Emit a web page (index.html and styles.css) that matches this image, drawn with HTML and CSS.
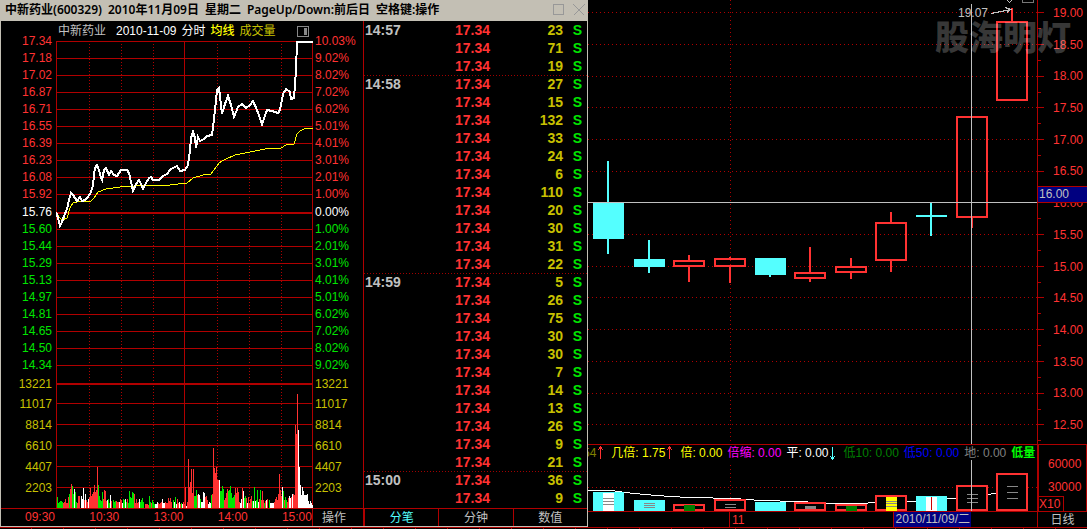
FILE: index.html
```
<!DOCTYPE html>
<html lang="zh-CN">
<head>
<meta charset="utf-8">
<title>中新药业(600329)</title>
<link rel="stylesheet" href="styles.css">
</head>
<body>
<main class="terminal">
  <section class="window">
    <header class="titlebar">
      <h1 class="title"><span>中新药业(600329)</span> <span>2010年11月09日</span> <span>星期二</span> <span>PageUp/Down:前后日</span> <span>空格键:操作</span></h1>
      <button class="winbtn" aria-label="最大化"><svg width="12" height="12" viewBox="0 0 12 12"><rect x=".5" y=".5" width="10" height="10"/></svg></button>
      <button class="winbtn" aria-label="关闭"><svg width="12" height="12" viewBox="0 0 12 12"><path d="M.5 .5l11 11M11.500 .5l-11 11"/></svg></button>
    </header>
    <div class="panes">
      <div class="intraday">
        <div class="legend">
          <span class="silver">中新药业</span>
          <span class="white date">2010-11-09</span>
          <span class="white">分时</span>
          <span class="yellow">均线</span>
          <span class="olive">成交量</span>
          <button class="panelbtn" aria-label="侧栏"><svg width="12" height="11" viewBox="0 0 12 11"><rect x=".5" y=".5" width="11" height="10" rx="1" fill="none" stroke="#888"/><path d="M7 2h3v7H7z" fill="#888"/></svg></button>
        </div>
        <div class="plotrow">
          <ol class="scale left">
            <li>17.34</li><li>17.18</li><li>17.02</li><li>16.87</li><li>16.71</li><li>16.55</li><li>16.39</li><li>16.23</li><li>16.08</li><li>15.92</li>
            <li class="base">15.76</li>
            <li class="down">15.60</li><li class="down">15.44</li><li class="down">15.29</li><li class="down">15.13</li><li class="down">14.97</li><li class="down">14.81</li><li class="down">14.65</li><li class="down">14.50</li><li class="down">14.34</li>
            <li class="vol first">13221</li><li class="vol">11017</li><li class="vol">8814</li><li class="vol">6610</li><li class="vol">4407</li><li class="vol">2203</li>
          </ol>
          <svg class="plot" viewBox="56 41 257 467" preserveAspectRatio="none" role="img" aria-label="分时走势">
            <g class="grid">
              <path d="M56 41.500H313M56 58.500H313M56 75.500H313M56 92.500H313M56 109.500H313M56 126.500H313M56 143.500H313M56 160.500H313M56 177.500H313M56 194.500H313M56 229.500H313M56 246.500H313M56 263.500H313M56 280.500H313M56 297.500H313M56 314.500H313M56 331.500H313M56 348.500H313M56 365.500H313M56 403.500H313M56 424.500H313M56 445.500H313M56 466.500H313M56 487.500H313M56.500 41V508M184.500 41V508M312.500 41V508"/>
              <path class="thick" d="M56 213H313M56 384H313"/>
              <path class="dots" d="M89.500 41V508M121.500 41V508M153.500 41V508M217.500 41V508M249.500 41V508M281.500 41V508"/>
            </g>
            <g id="volume"></g>
            <path class="avg" d="M56 212L59 217 62 220 67 218 70 208 73 203 77 202 91 201 94 198 98 192 106 189 120 187 135 186 150 185 170 185 187 183 193 178 203 175 211 174 214 170 219 163 224 160 235 155 250 152 265 149 281 148 286 145 294 144 297 134 300 131 304 129 313 128"/>
            <path class="price" d="M56 212L58 218 60 226 62 222 64 216 67 209 69 200 71 193 73 195 75 198 77 201 80 197 82 201 85 200 88 197 91 192 93 185 94 175 95 168 97 165 99 170 101 178 102 180 104 170 106 168 109 175 111 171 114 175 117 176 121 170 127 170 129 173 131 182 133 191 136 184 139 180 141 184 143 189 146 183 149 178 151 177 153 180 159 180 163 176 167 174 171 169 177 166 180 171 185 170 188 165 190 150 191 138 193 132 195 138 196 148 198 137 200 141 204 139 207 136 212 135 213 128 215 110 217 90 219 88 222 114 225 104 228 96 231 105 234 117 238 107 242 104 246 108 250 105 253 101 257 110 262 124 267 110 272 111 278 113 280 110 283 94 286 89 290 92 291 99 294 98 296 70 297 42 313 42"/>
          </svg>
          <ol class="scale right">
            <li>10.03%</li><li>9.02%</li><li>8.02%</li><li>7.02%</li><li>6.02%</li><li>5.01%</li><li>4.01%</li><li>3.01%</li><li>2.01%</li><li>1.00%</li>
            <li class="base">0.00%</li>
            <li class="down">1.00%</li><li class="down">2.01%</li><li class="down">3.01%</li><li class="down">4.01%</li><li class="down">5.01%</li><li class="down">6.02%</li><li class="down">7.02%</li><li class="down">8.02%</li><li class="down">9.02%</li>
            <li class="vol first">13221</li><li class="vol">11017</li><li class="vol">8814</li><li class="vol">6610</li><li class="vol">4407</li><li class="vol">2203</li>
          </ol>
        </div>
        <div class="timebar">
          <div class="times"><span>09:30</span><span>10:30</span><span>13:00</span><span>14:00</span><span>15:00</span></div>
          <button class="ops">操作</button>
        </div>
      </div>
      <div class="ticks">
        <table class="ticktable">
          <tbody>
          <tr><th>14:57</th><td class="p">17.34</td><td class="q">23</td><td class="s">S</td></tr>
          <tr><th></th><td class="p">17.34</td><td class="q">71</td><td class="s">S</td></tr>
          <tr><th></th><td class="p">17.34</td><td class="q">19</td><td class="s">S</td></tr>
          </tbody>
          <tbody>
          <tr><th>14:58</th><td class="p">17.34</td><td class="q">27</td><td class="s">S</td></tr>
          <tr><th></th><td class="p">17.34</td><td class="q">15</td><td class="s">S</td></tr>
          <tr><th></th><td class="p">17.34</td><td class="q">132</td><td class="s">S</td></tr>
          <tr><th></th><td class="p">17.34</td><td class="q">33</td><td class="s">S</td></tr>
          <tr><th></th><td class="p">17.34</td><td class="q">24</td><td class="s">S</td></tr>
          <tr><th></th><td class="p">17.34</td><td class="q">6</td><td class="s">S</td></tr>
          <tr><th></th><td class="p">17.34</td><td class="q">110</td><td class="s">S</td></tr>
          <tr><th></th><td class="p">17.34</td><td class="q">20</td><td class="s">S</td></tr>
          <tr><th></th><td class="p">17.34</td><td class="q">30</td><td class="s">S</td></tr>
          <tr><th></th><td class="p">17.34</td><td class="q">31</td><td class="s">S</td></tr>
          <tr><th></th><td class="p">17.34</td><td class="q">22</td><td class="s">S</td></tr>
          </tbody>
          <tbody>
          <tr><th>14:59</th><td class="p">17.34</td><td class="q">5</td><td class="s">S</td></tr>
          <tr><th></th><td class="p">17.34</td><td class="q">26</td><td class="s">S</td></tr>
          <tr><th></th><td class="p">17.34</td><td class="q">75</td><td class="s">S</td></tr>
          <tr><th></th><td class="p">17.34</td><td class="q">30</td><td class="s">S</td></tr>
          <tr><th></th><td class="p">17.34</td><td class="q">30</td><td class="s">S</td></tr>
          <tr><th></th><td class="p">17.34</td><td class="q">7</td><td class="s">S</td></tr>
          <tr><th></th><td class="p">17.34</td><td class="q">14</td><td class="s">S</td></tr>
          <tr><th></th><td class="p">17.34</td><td class="q">13</td><td class="s">S</td></tr>
          <tr><th></th><td class="p">17.34</td><td class="q">26</td><td class="s">S</td></tr>
          <tr><th></th><td class="p">17.34</td><td class="q">9</td><td class="s">S</td></tr>
          <tr><th></th><td class="p">17.34</td><td class="q">21</td><td class="s">S</td></tr>
          </tbody>
          <tbody>
          <tr><th>15:00</th><td class="p">17.34</td><td class="q">36</td><td class="s">S</td></tr>
          <tr><th></th><td class="p">17.34</td><td class="q">9</td><td class="s">S</td></tr>
          </tbody>
        </table>
        <nav class="tabs">
          <button class="tab active">分笔</button>
          <button class="tab">分钟</button>
          <button class="tab">数值</button>
        </nav>
      </div>
    </div>
  </section>

  <section class="daily">
    <div class="candles">
      <svg class="fill" viewBox="588 0 449 444" preserveAspectRatio="none" role="img" aria-label="日线">
        <path class="hdots" d="M588 12.500H1037M588 44.500H1037M588 76.500H1037M588 107.500H1037M588 139.500H1037M588 171.500H1037M588 234.500H1037M588 266.500H1037M588 297.500H1037M588 329.500H1037M588 361.500H1037M588 393.500H1037M588 424.500H1037M730.500 0V444"/>
        <g class="fall">
          <path d="M593 203h31v36h-31zM607 161h2v93h-2zM634 259h31v8h-31zM648 240h2v33h-2zM755 258h31v17h-31zM769 275h2v2h-2zM916 215h31v2h-31zM930 203h2v33h-2z"/>
        </g>
        <g class="rise">
          <path d="M674 261h30v5h-30zM715 259h30v7h-30zM795 273h30v5h-30zM836 267h30v5h-30zM876 223h30v37h-30zM957 117h30v100h-30zM997 22h30v78h-30z"/>
          <path d="M689 255v6M689 267v15M730 257v2M730 267v16M810 247v26M810 279v3M851 258v9M851 273v6M891 212v10M891 261v11M972 218v10M1012 8v14"/>
        </g>
        <path class="cross" d="M588 202.500H1037M971.500 4V444"/>
        <path class="note" d="M991 13.500L1011 9.500M1005 7.500L1011 9.500 1007 12.500M1007 0l2.500 2.500 2.500-2.500"/>
        <path d="M1022.500 0v2.500h11V0" fill="none" stroke="#777"/>
      </svg>
      <span class="high">19.07</span>
      <span class="mark">股海明灯</span>
    </div>
    <div class="axis">
      <svg class="tickmarks" width="6" height="444" viewBox="0 0 6 444"><path d="M0 12.500h6M0 28.500h3M0 44.500h6M0 60.500h3M0 76.500h6M0 92.500h3M0 107.500h6M0 123.500h3M0 139.500h6M0 155.500h3M0 171.500h6M0 187.500h3M0 202.500h6M0 218.500h3M0 234.500h6M0 250.500h3M0 266.500h6M0 282.500h3M0 297.500h6M0 313.500h3M0 329.500h6M0 345.500h3M0 361.500h6M0 377.500h3M0 393.500h6M0 409.500h3M0 424.500h6M0 440.500h3"/></svg>
      <ol class="prices"><li>19.00</li><li>18.50</li><li>18.00</li><li>17.50</li><li>17.00</li><li>16.50</li><li>16.00</li><li>15.50</li><li>15.00</li><li>14.50</li><li>14.00</li><li>13.50</li><li>13.00</li><li>12.50</li></ol>
      <output class="cursor">16.00</output>
    </div>
    <div class="indicator">
      <div class="readout">
        <span class="dim">54<svg width="10" height="14" viewBox="0 0 10 14"><path class="ar" d="M4.500 1v12M2 4l2.500-3 2.500 3"/></svg></span>
        <span class="bright">几倍: 1.75<svg width="10" height="14" viewBox="0 0 10 14"><path class="ar" d="M4.500 1v12M2 4l2.500-3 2.500 3"/></svg></span>
        <span class="bright">倍: 0.00</span>
        <span class="magenta">倍缩: 0.00</span>
        <span class="white">平: 0.00<svg width="10" height="14" viewBox="0 0 10 14"><path class="ac" d="M4.500 1v12M2 10l2.500 3 2.500-3"/></svg></span>
        <span class="green">低10: 0.00</span>
        <span class="blue">低50: 0.00</span>
        <span class="gray">地: 0.00</span>
        <span class="lime">低量</span>
      </div>
      <svg class="volplot" viewBox="588 460 449 51" preserveAspectRatio="none" role="img" aria-label="成交量">
        <path class="hdots" d="M588 487.500H1037M730.500 465V511"/>
        <path class="ma" d="M588 490.500H612L625 492.500 645 494.500 670 496.500 690 497.500 735 498.500 760 500.500 800 501.500 830 503.500H862L875 502.500 912 501.500 930 499.500 955 498.500 985 494.500 997 493.500"/>
        <path fill="#54ffff" d="M593 492h31v19h-31zM634 500h31v11h-31zM755 502h31v9h-31zM916 496h31v15h-31z"/>
        <path fill="#fff" d="M603 493h11v18h-11zM926 497h11v14h-11z"/>
        <path fill="#000" d="M674 504h30v7h-30zM715 500h30v11h-30zM795 503h30v8h-30zM836 505h30v6h-30zM876 496h30v15h-30zM957 486h30v25h-30zM997 474h30v37h-30z"/>
        <path fill="none" stroke="#ff3232" stroke-width="2" d="M674 511v-6h30v6M715 511v-11h30v11M795 511v-8h30v8M836 511v-6h30v6M876 511v-15h30v15M957 511v-25h30v25M997 511v-37h30v37M674 510h30M715 510h30M795 510h30M836 510h30M876 510h30M957 510h30M997 510h30"/>
        <path fill="#008000" d="M684 505h11v6h-11zM846 506h11v5h-11z"/>
        <path fill="#ff0" d="M886 497h11v14h-11z"/>
        <path fill="#888" d="M805 506h11v3h-11z"/>
        <path stroke="#888" d="M603 498.500h11M603 501.500h11M603 504.500h11M644 503.500h11M644 505.500h11M644 507.500h11M725 504.500h11M725 507.500h11M886 501.500h11M886 503.500h11M886 506.500h11M967 494.500h11M967 498.500h11M967 502.500h11M1007 486.500h11M1007 492.500h11M1007 498.500h11"/>
        <path stroke="#c00" d="M931.500 497v13"/>
        <path class="cross" d="M971.500 460V511"/>
      </svg>
    </div>
    <div class="volaxis">
      <ol class="vols"><li>60000</li><li>30000</li></ol>
      <span class="unit">X10</span>
    </div>
    <div class="datebar">
      <span class="month">11</span>
      <output class="day">2010/11/09/二</output>
    </div>
    <button class="period">日线</button>
  </section>
</main>
<footer class="strip"></footer>
<script src="volume.js"></script>
</body>
</html>
```
FILE: styles.css
```
* { box-sizing: border-box; }
body {
  margin: 0;
  background: #000;
  color: #c0c0c0;
  font: 12px/16px "Liberation Sans", "Noto Sans CJK SC", sans-serif;
}
ol { margin: 0; padding: 0; list-style: none; }
button { font: inherit; color: inherit; background: none; border: 0; padding: 0; margin: 0; }
svg { display: block; shape-rendering: crispEdges; }
.terminal { display: grid; grid-template-columns: 588fr 499fr; }
.white { color: #fff; }
.yellow { color: #ff0; font-weight: 500; }
.olive { color: #c8c000; }
.silver { color: #c0c0c0; }

.window {
  display: flex;
  flex-direction: column;
  border: 1px solid #c3bfb4;
  border-top: 0;
}
.titlebar {
  display: flex;
  align-items: center;
  gap: 8px;
  height: 21px;
  padding: 0 2px 2px 4px;
  background: #c3bfb4;
  color: #000;
}
.title {
  flex: 1;
  display: flex;
  gap: 6px;
  margin: 0;
  font: 600 12px/18px "Noto Sans", "Noto Sans CJK SC", sans-serif;
  white-space: nowrap;
}
.winbtn svg { fill: none; stroke: #989898; }
.winbtn { width: 12px; }
.panes { flex: 1; display: grid; grid-template-columns: 362fr 224fr; }

.intraday { display: flex; flex-direction: column; min-width: 0; }
.legend {
  display: flex;
  align-items: center;
  gap: 5px;
  height: 20px;
  padding: 0 54px 0 57px;
  white-space: nowrap;
}
.date { margin-left: 5px; }
.panelbtn { margin-left: auto; }
.plotrow { display: flex; height: 467px; }
.plot { flex: 1; min-width: 0; height: 467px; }
.scale { margin-top: -8px; color: #ff3232; line-height: 17px; }
.scale .base { color: #fff; line-height: 18px; }
.scale .down { color: #00e600; }
.scale .vol { color: #c8c000; line-height: 21px; }
.scale .first { line-height: 20px; }
.left { width: 55px; padding-right: 4px; text-align: right; }
.right { width: 50px; padding-left: 2px; }
.grid path { fill: none; stroke: #b00000; }
.grid .thick { stroke-width: 2; }
.grid .dots { stroke-dasharray: 1 2; }
.avg { fill: none; stroke: #ff0; }
.price { fill: none; stroke: #fff; stroke-width: 2; }
.timebar { display: flex; height: 18px; border-top: 1px solid #b00000; }
.times {
  flex: 1;
  display: flex;
  justify-content: space-between;
  padding: 0 0 0 24px;
  border-right: 1px solid #b00000;
  color: #ff3232;
}
.ops { width: 50px; padding-right: 8px; }

.ticks { display: flex; flex-direction: column; border-left: 1px solid #b00000; }
.ticktable {
  width: 100%;
  border-collapse: collapse;
  table-layout: fixed;
  font-size: 14px;
  font-weight: 700;
  line-height: 18px;
}
.ticktable th, .ticktable td { padding: 0; height: 18px; text-align: right; }
.ticktable th { width: 51px; padding-left: 1px; text-align: left; }
.ticktable .p { width: 76px; padding-right: 1px; color: #ff3232; }
.ticktable .q { color: #c8c000; }
.ticktable .s { width: 24px; padding-right: 5px; color: #00e600; }
.ticktable tbody + tbody {
  background: repeating-linear-gradient(90deg, #a00000 0 1px, #000 1px 3px) 0 0 / 100% 1px no-repeat;
}
.tabs { display: grid; grid-template-columns: repeat(3, 1fr); height: 18px; margin-top: auto; border-top: 1px solid #b00000; }
.tab { border-left: 1px solid #b00000; }
.active { color: #54ffff; }

.daily {
  display: grid;
  grid-template-columns: 1fr 50px;
  grid-template-rows: 444px 67px 16px;
}
.candles { position: relative; }
.fill { width: 100%; height: 444px; }
.hdots { fill: none; stroke: #b00000; stroke-dasharray: 1 3; }
.fall { fill: #54ffff; }
.rise { fill: none; stroke: #ff3232; stroke-width: 2; }
.cross { fill: none; stroke: #c0c0c0; }
.note { fill: none; stroke: #c0c0c0; }
.high { position: absolute; top: 5px; right: 49px; }
.mark {
  position: absolute;
  top: 12px;
  right: -34px;
  z-index: 1;
  color: rgba(255, 255, 255, .22);
  font: 900 34px/48px "Noto Sans CJK SC", sans-serif;
  white-space: nowrap;
}
.axis { position: relative; display: flex; border-left: 1px solid #b00000; }
.tickmarks path { stroke: #b00000; }
.prices {
  flex: 1;
  display: flex;
  flex-direction: column;
  height: 444px;
  margin-top: -3px;
  padding-left: 9px;
  color: #ff3232;
}
.prices li { flex: 1; display: flex; align-items: center; }
.cursor {
  position: absolute;
  top: 186px;
  left: 0;
  right: 0;
  padding-left: 1px;
  border: solid #b00000;
  border-width: 1px 0;
  background: #000080;
  line-height: 15px;
}
.indicator { border-top: 1px solid #b00000; min-width: 0; overflow: hidden; }
.readout {
  display: flex;
  gap: 5px;
  height: 15px;
  margin-left: -5px;
  white-space: nowrap;
  overflow: hidden;
}
.readout span { display: flex; align-items: center; white-space: pre; }
.dim { color: #808000; }
.bright { color: #ff0; }
.magenta { color: #f0f; }
.green { color: #008000; }
.blue { color: #00f; }
.gray { color: #808080; }
.lime { color: #0f0; font-weight: 700; }
.ar { fill: none; stroke: #ff3232; }
.ac { fill: none; stroke: #54ffff; }
.volplot { width: 100%; height: 51px; }
.ma { fill: none; stroke: #fff; }
.volaxis {
  display: flex;
  flex-direction: column;
  justify-content: space-between;
  border: 1px solid #b00000;
  border-left-width: 2px;
  border-bottom: 0;
  color: #ff3232;
}
.vols { padding: 9px 0 0 9px; }
.vols li { height: 23px; line-height: 20px; }
.unit { width: 25px; height: 15px; border: solid #b00000; border-width: 1px 1px 0 0; line-height: 15px; margin-top: -10px; }
.datebar {
  display: flex;
  justify-content: space-between;
  padding: 0 66px 0 141px;
  border-top: 1px solid #b00000;
}
.month { padding-left: 2px; border-left: 1px solid #b00000; color: #ff3232; }
.day { padding: 0 1px; border-left: 1px solid #b00000; background: #000080; line-height: 15px; }
.period { border: solid #b00000; border-width: 1px 0 0 1px; line-height: 14px; }
.strip {
  height: 2px;
  border-top: 1px solid #b00000;
  background: repeating-linear-gradient(90deg, #000 0 31px, #b00000 31px 32px);
}
```
FILE: volume.js
```
// One token per minute: colour (r rise, g fall, w flat) and bar height.
const minutes = `
g11 g5 g6 g7 g7 g6 r5 r6 r9 r5 r5 r11 g14 r19
r24 g22 g14 w19 g16 g6 r5 r12 r12 w0 w12 w9 w20 r8
w14 r8 r6 w9 r11 r20 r12 r14 r16 r23 r16 r18 r41 g23
g12 g8 g7 g16 r9 r18 r17 r7 w8 g9 g5 w13 r7 w0
g8 g6 g7 r7 r6 r6 w6 r9 r8 w5 g9 g8 w9 g6
r9 g5 g17 g11 g10 g16 g15 r14 r5 r9 r5 r6 w9 g6
g8 g10 g6 w0 r4 r4 r4 r3 g12 g6 r5 g8 g6 g4
w4 w4 w6 r5 r4 r5 r6 w9 w5 w5 r6 r5 r5 r10
r7 r10 r6 w0 g8 w6 g11 w4 r9 r5 w6 r4 g5 w4 r6
r4 r21 w2 r6 r49 r21 r26 r39 r15 r39 g12 g12 g18 r13
w14 w13 g9 w6 w6 w16 w15 r11 r12 r8 w4 w6 w5 g13
r14 r60 r40 r35 r41 r28 r28 w28 g17 g17 g22 g19 r8 r10
r15 r19 g17 g18 g22 g15 g10 g11 g13 r20 r15 r20 r16 r6
w5 w9 r20 w17 g10 g12 r10 w5 r11 r5 r9 r12 g7 w7
g21 w7 g8 g18 w6 r9 g18 r8 r17 r8 g5 r7 w8 r9
w0 g8 w5 w5 w5 w5 r6 r9 r11 r8 r14 r34 r18 r12
w21 g17 r8 g11 g8 r6 r10 w12 w10 r11 w14 r14 r13 r83 r74 r114
w78 w41 w23 w13 w21 w17 w13 w13 w13 w14 w7 w4 w7 w5 w3`.trim().split(/\s+/);

const fills = { r: "#ff3232", g: "#00e600", w: "#ffffff" };
const layer = document.getElementById("volume");
// The session ends at x = 312 and the bars stand on y = 508.
const start = 313 - minutes.length;
for (const key of Object.keys(fills)) {
  const path = document.createElementNS("http://www.w3.org/2000/svg", "path");
  path.setAttribute("fill", fills[key]);
  path.setAttribute("d", minutes
    .map((m, i) => (m[0] === key ? `M${start + i} 508v-${m.slice(1)}h1v${m.slice(1)}z` : ""))
    .join(""));
  layer.append(path);
}
```
